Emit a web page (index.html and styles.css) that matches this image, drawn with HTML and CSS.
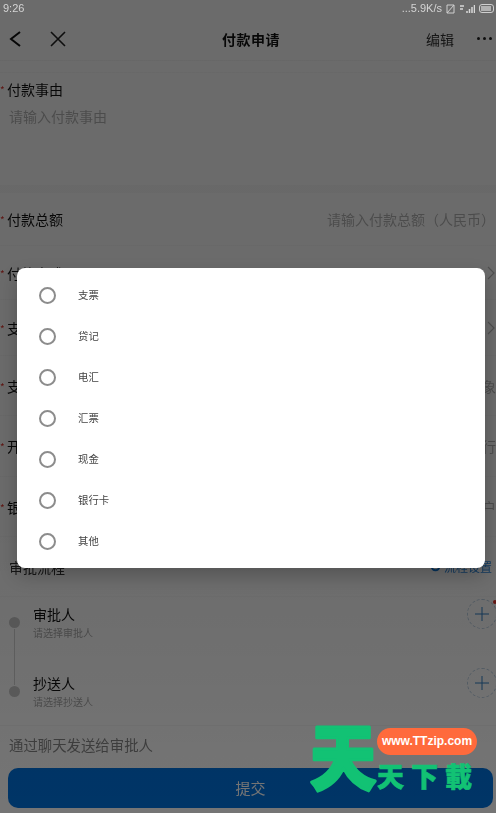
FILE: index.html
```html
<!DOCTYPE html>
<html lang="zh">
<head>
<meta charset="utf-8">
<title>付款申请</title>
<link rel="stylesheet" href="styles.css">
</head>
<body>
<div class="screen">
  <div class="status">
    <span class="time">9:26</span>
    <div class="status-right">
      <span class="speed">...5.9K/s</span>
      <svg width="9" height="10" viewBox="0 0 9 10"><path d="M1 1h7L1 9h7M1 1v8M8 1v8" fill="none" stroke="#cfcfcf" stroke-width="1"/></svg>
      <svg width="16" height="9" viewBox="0 0 16 9"><path d="M1 2h4M1 5h3M8 9V7M10.500 9V5M13 9V3M15.500 9V1" fill="none" stroke="#d8d8d8" stroke-width="1.500"/></svg>
      <svg width="16" height="9" viewBox="0 0 16 9"><rect x=".5" y=".5" width="14" height="8" rx="2.500" fill="none" stroke="#cfcfcf"/><rect x="2" y="2" width="10" height="5" fill="#cfcfcf" opacity=".7"/></svg>
    </div>
  </div>
  <div class="page">
    <header class="nav">
      <div class="nav-left">
        <svg width="16" height="18" viewBox="0 0 16 18"><path d="M13 2 4 9l9 7" fill="none" stroke="#111" stroke-width="2"/></svg>
        <svg width="18" height="18" viewBox="0 0 18 18"><path d="M2 2l14 14M16 2 2 16" fill="none" stroke="#222" stroke-width="1.600"/></svg>
      </div>
      <h1 class="nav-title">付款申请</h1>
      <div class="nav-right">
        <span class="nav-edit">编辑</span>
        <span class="nav-more"><i></i><i></i><i></i></span>
      </div>
    </header>
    <section class="reason">
      <div class="label"><b class="star">*</b>付款事由</div>
      <div class="placeholder reason-ph">请输入付款事由</div>
    </section>
    <div class="form">
      <div class="row"><div class="label"><b class="star">*</b>付款总额</div><div class="placeholder">请输入付款总额（人民币）</div></div>
      <div class="row"><div class="label"><b class="star">*</b>付款方式</div><svg class="chev" width="9" height="14" viewBox="0 0 9 14"><path d="M1 1l6 6-6 6" fill="none" stroke="#bbb" stroke-width="1.200"/></svg></div>
      <div class="row"><div class="label"><b class="star">*</b>支付日期</div><svg class="chev" width="9" height="14" viewBox="0 0 9 14"><path d="M1 1l6 6-6 6" fill="none" stroke="#bbb" stroke-width="1.200"/></svg></div>
      <div class="row edge"><div class="label"><b class="star">*</b>支付对象</div><div class="placeholder">请输入支付对象</div></div>
      <div class="row edge"><div class="label"><b class="star">*</b>开户行</div><div class="placeholder">请输入开户行</div></div>
      <div class="row edge"><div class="label"><b class="star">*</b>银行账户</div><div class="placeholder">请输入银行账户</div></div>
      <div class="row flow">
        <div class="flow-title">审批流程</div>
        <div class="flow-set"><svg width="11" height="11" viewBox="0 0 11 11"><circle cx="5.500" cy="5.500" r="3.800" fill="none" stroke="#0b78d8" stroke-width="2"/></svg>流程设置</div>
      </div>
    </div>
    <div class="person first">
      <span class="dot"></span>
      <div class="person-text"><div class="person-name">审批人</div><div class="person-sub">请选择审批人</div></div>
      <span class="add"><svg width="14" height="14" viewBox="0 0 14 14"><path d="M7 0v14M0 7h14" stroke="#2f7fc4" stroke-width="1"/></svg><b class="add-mark"></b></span>
    </div>
    <div class="person">
      <span class="dot"></span>
      <div class="person-text"><div class="person-name">抄送人</div><div class="person-sub">请选择抄送人</div></div>
      <span class="add"><svg width="14" height="14" viewBox="0 0 14 14"><path d="M7 0v14M0 7h14" stroke="#2f7fc4" stroke-width="1"/></svg></span>
    </div>
    <div class="notify">通过聊天发送给审批人</div>
    <div class="submit">提交</div>
  </div>

  <div class="scrim"></div>

  <div class="dialog">
    <div class="option"><span class="radio"></span><span class="option-text">支票</span></div>
    <div class="option"><span class="radio"></span><span class="option-text">贷记</span></div>
    <div class="option"><span class="radio"></span><span class="option-text">电汇</span></div>
    <div class="option"><span class="radio"></span><span class="option-text">汇票</span></div>
    <div class="option"><span class="radio"></span><span class="option-text">现金</span></div>
    <div class="option"><span class="radio"></span><span class="option-text">银行卡</span></div>
    <div class="option"><span class="radio"></span><span class="option-text">其他</span></div>
  </div>

  <div class="mark">
    <svg class="mark-big" width="70" height="70" viewBox="0 0 70 70"><text class="mark-glyph" x="35" y="61">天</text></svg>
    <div class="mark-side">
      <span class="mark-url">www.TTzip.com</span>
      <span class="mark-name">天下載</span>
    </div>
  </div>
</div>
</body>
</html>
```

FILE: styles.css
```css
* { box-sizing: border-box; }
html, body { margin: 0; padding: 0; }
body {
  width: 496px;
  height: 813px;
  overflow: hidden;
  font-family: "Noto Sans CJK SC", "Liberation Sans", sans-serif;
}
.screen { position: relative; width: 496px; height: 813px; overflow: hidden; background: #fff; }
.page {
  display: flex;
  flex-direction: column;
  height: 796px;
  background: #fff;
  color: #111;
  filter: blur(0.7px);
}
.status {
  position: relative;
  z-index: 2;
  height: 17px;
  display: flex;
  justify-content: space-between;
  align-items: center;
  padding: 0 1px 0 3px;
  color: #d4d4d4;
  font: 11px/17px "Liberation Sans", sans-serif;
  filter: blur(0.3px);
}
.status-right { display: flex; align-items: center; gap: 4px; }
.nav {
  height: 44px;
  display: flex;
  align-items: center;
  justify-content: space-between;
  padding: 0 4px 0 7px;
  border-bottom: 1px solid #f6f6f6;
}
.nav-left { display: flex; align-items: center; gap: 26px; width: 120px; }
.nav-title { margin: 0 0 0 3px; font-size: 14px; font-weight: 700; letter-spacing: 0.5px; line-height: 20px; color: #111; }
.nav-right { display: flex; align-items: center; justify-content: flex-end; gap: 23px; width: 120px; }
.nav-edit { font-size: 14px; color: #333; }
.nav-more { display: flex; gap: 3px; }
.nav-more i { width: 3px; height: 3px; border-radius: 50%; background: #222; }
.reason {
  margin-top: 11px;
  height: 121px;
  padding: 6px 0 0 0;
  border-top: 1px solid #f8f8f8;
  border-bottom: 8px solid #f9f9f9;
}
.label { font-size: 14px; line-height: 20px; color: #111; white-space: nowrap; }
.star { display: inline-block; width: 7px; padding-top: 4px; color: #e0342c; font-weight: 400; font-size: 10px; line-height: 14px; vertical-align: top; }
.placeholder { font-size: 14px; line-height: 20px; color: #b5b5b5; white-space: nowrap; }
.reason-ph { padding: 7px 0 0 9px; }
.form { display: grid; grid-template-rows: 53px 54px 56px 60px 61px 60px 60px; }
.row {
  display: flex;
  align-items: center;
  justify-content: space-between;
  padding: 0 1px 0 0;
  border-bottom: 1px solid #f9f9f9;
}
.row.edge { padding-right: 0; }
.chev { margin-right: -1px; }
.flow { padding: 0 4px 0 9px; }
.flow-title { font-size: 14px; color: #333; }
.flow-set { display: flex; align-items: center; gap: 3px; font-size: 12px; color: #2f8ae0; }
.person {
  position: relative;
  height: 59px;
  display: flex;
  align-items: flex-start;
  padding: 2px 0 0 9px;
}
.person.first { height: 69px; }
.dot { width: 11px; height: 11px; margin-top: 18px; border-radius: 50%; background: #c9c9c9; flex: none; }
.person.first::after {
  content: "";
  position: absolute;
  left: 14px;
  top: 32px;
  width: 1px;
  height: 56px;
  background: #d4d4d4;
}
.person-text { margin: 5px 0 0 13px; flex: 1; }
.person-name { font-size: 14px; line-height: 20px; color: #111; }
.person-sub { font-size: 10px; line-height: 17px; color: #a8a8a8; }
.add {
  position: relative;
  width: 30px;
  height: 30px;
  margin-right: -1px;
  border: 1px dashed #bcd0e2;
  border-radius: 50%;
  display: flex;
  align-items: center;
  justify-content: center;
  flex: none;
}
.add-mark { position: absolute; right: -1px; top: 0; width: 4px; height: 4px; background: #e8362c; border-radius: 50%; }
.notify {
  height: 43px;
  padding: 0 0 0 9px;
  border-top: 1px solid #f6f6f6;
  font-size: 14.400px;
  line-height: 38px;
  color: #888;
}
.submit {
  height: 40px;
  margin: 0 3px 5px 8px;
  border-radius: 10px;
  background: #0073e0;
  color: #fff;
  font-size: 15px;
  line-height: 40px;
  text-align: center;
}
.scrim {
  position: absolute;
  inset: 0;
  background: linear-gradient(rgba(0, 0, 0, 0.58), rgba(0, 0, 0, 0.58) 65%, rgba(0, 0, 0, 0.54));
}
.dialog {
  position: absolute;
  left: 17px;
  top: 268px;
  width: 468px;
  height: 300px;
  display: flex;
  flex-direction: column;
  padding-top: 7px;
  background: #fff;
  border-radius: 8px;
  box-shadow: 0 8px 18px rgba(0, 0, 0, 0.22);
}
.option { height: 41px; flex: none; display: flex; align-items: center; padding-left: 22px; }
.radio { width: 17px; height: 17px; border: 2px solid #8c8c8c; border-radius: 50%; flex: none; }
.option-text { margin-left: 22px; padding-bottom: 2px; font-size: 10.400px; color: #444; filter: blur(0.3px); }
.mark {
  position: absolute;
  left: 308px;
  top: 723px;
  display: flex;
  color: #12c274;
}
.mark-big { flex: none; overflow: visible; }
.mark-glyph {
  font-size: 72px;
  font-weight: 900;
  text-anchor: middle;
  fill: #12c274;
  stroke: #12c274;
  stroke-width: 3px;
  stroke-linejoin: round;
  stroke-linecap: round;
  transform: scaleX(0.92);
  transform-origin: 35px 35px;
}
.mark-side { display: flex; flex-direction: column; margin-left: -1px; }
.mark-url {
  width: 100px;
  height: 27px;
  margin-top: 5px;
  border-radius: 14px;
  background: #ff6a3c;
  color: #fff;
  font: 700 12px/27px "Liberation Sans", sans-serif;
  text-align: center;
}
.mark-name {
  font-size: 27px;
  line-height: 32px;
  margin-top: 5px;
  font-weight: 900;
  letter-spacing: 7px;
  white-space: nowrap;
  -webkit-text-stroke: 0.6px #12c274;
}
```
